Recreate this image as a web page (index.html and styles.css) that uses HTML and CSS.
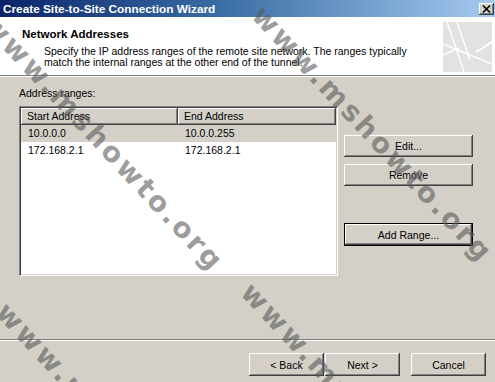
FILE: index.html
```html
<!DOCTYPE html>
<html lang="en">
<head>
    <meta charset="UTF-8">
    <title>Create Site-to-Site Connection Wizard</title>
    <link rel="stylesheet" href="styles.css">
</head>
<body>
    <div class="window">
        <!-- Barra de titulo -->
        <div class="titlebar">
            <span class="title">Create Site-to-Site Connection Wizard</span>
            <span class="close">
                <svg width="9" height="8" viewBox="0 0 9 8"><path d="M1 0.5 L8 7.5 M8 0.5 L1 7.5" stroke="#000" stroke-width="1.6"/></svg>
            </span>
        </div>

        <!-- Cabecera blanca -->
        <div class="header">
            <div class="header-text">
                <h1>Network Addresses</h1>
                <p>Specify the IP address ranges of the remote site network. The ranges typically<br>match the internal ranges at the other end of the tunnel.</p>
            </div>
            <svg class="header-icon" width="49" height="50" viewBox="0 0 49 50">
                <rect width="49" height="50" fill="#e2e2e2"/>
                <path d="M4 0 L21 50 M14 0 L27 38 M0 22 L49 42 M0 33 L16 26 M33 30 L49 20" stroke="#fff" stroke-width="1.5" fill="none"/>
            </svg>
        </div>

        <!-- Contenido -->
        <div class="content">
            <div class="label">Address ranges:</div>
            <div class="ranges">
                <div class="listbox">
                    <div class="list-head">
                        <span>Start Address</span>
                        <span>End Address</span>
                    </div>
                    <div class="row selected">
                        <span>10.0.0.0</span>
                        <span>10.0.0.255</span>
                    </div>
                    <div class="row">
                        <span>172.168.2.1</span>
                        <span>172.168.2.1</span>
                    </div>
                </div>
                <div class="side-buttons">
                    <button class="btn">Edit...</button>
                    <button class="btn">Remove</button>
                    <button class="btn default">Add Range...</button>
                </div>
            </div>
        </div>

        <!-- Botones inferiores -->
        <div class="footer">
            <button class="btn nav">&lt; Back</button>
            <button class="btn nav">Next &gt;</button>
            <button class="btn nav cancel">Cancel</button>
        </div>

        <!-- Marcas de agua -->
        <span class="watermark wm1">www.mshowto.org</span>
        <span class="watermark wm2">www.mshowto.org</span>
        <span class="watermark wm3">www.mshowto.org</span>
        <span class="watermark wm4">www.mshowto.org</span>
    </div>
</body>
</html>
```

FILE: styles.css
```css
/* Ventana del asistente */
body {
    margin: 0;
    background: #d4d0c8;
    font-family: "Liberation Sans", Arial, sans-serif;
    font-size: 10.5px;
    color: #000;
}

.window {
    position: relative;
    width: 495px;
    height: 382px;
    overflow: hidden;
    background: #d4d0c8;
}

.titlebar {
    height: 17px;
    display: flex;
    align-items: center;
    justify-content: space-between;
    padding: 0 1px 0 3px;
    background: linear-gradient(to right, #0a246a, #3a6ea5 45%, #a6caf0);
}

.title {
    color: #fff;
    font-weight: bold;
    font-size: 11.8px;
}

.close {
    width: 15px;
    height: 12px;
    display: flex;
    align-items: center;
    justify-content: center;
    background: #d4d0c8;
    box-shadow: inset -1px -1px #404040, inset 1px 1px #fff, inset -2px -2px #808080;
}

.header {
    height: 59px;
    box-sizing: border-box;
    display: flex;
    justify-content: space-between;
    padding: 5px 3px 0 22px;
    background: #fff;
    border-bottom: 1px solid #808080;
    box-shadow: 0 1px #fff;
    margin-bottom: 1px;
}

.header-text {
    padding-top: 6px;
}

.header h1 {
    margin: 0;
    font-size: 11.5px;
    line-height: 13px;
}

.header p {
    margin: 5px 0 0 22px;
    line-height: 11px;
}

.content {
    height: 262px;
    padding-left: 19px;
}

.label {
    padding-top: 10px;
    line-height: 13px;
    margin-bottom: 6px;
}

.ranges {
    display: flex;
    gap: 6px;
}

.listbox {
    width: 319px;
    height: 170px;
    box-sizing: border-box;
    background: #fff;
    border: 1px solid;
    border-color: #808080 #fff #fff #808080;
    box-shadow: inset 1px 1px #404040, inset -1px -1px #d4d0c8;
    padding: 1px 1px 0 1px;
}

.list-head,
.row {
    display: grid;
    grid-template-columns: 157px 158px;
}

.list-head span {
    height: 17px;
    line-height: 17px;
    padding-left: 6px;
    background: #d4d0c8;
    box-shadow: inset -1px -1px #404040, inset 1px 1px #fff, inset -2px -2px #808080;
}

.row span {
    height: 17px;
    line-height: 17px;
    padding-left: 7px;
}

.row.selected {
    background: #d4d0c8;
}

.side-buttons {
    display: flex;
    flex-direction: column;
    gap: 7px;
    padding-top: 29px;
}

/* Botones clasicos */
.btn {
    width: 129px;
    height: 22px;
    padding: 0;
    border: none;
    background: #d4d0c8;
    font-family: "Liberation Sans", Arial, sans-serif;
    font-size: 10.5px;
    color: #000;
    box-shadow: inset -1px -1px #404040, inset 1px 1px #fff, inset -2px -2px #808080;
}

.btn.default {
    height: 23px;
    margin-top: 30px;
    border: 1px solid #000;
}

.footer {
    height: 41px;
    box-sizing: border-box;
    display: flex;
    justify-content: flex-end;
    gap: 1px;
    padding: 13px 9px 0 0;
    border-top: 1px solid #808080;
    box-shadow: inset 0 1px #fff;
}

.btn.nav {
    width: 75px;
    height: 23px;
}

.btn.cancel {
    margin-left: 10px;
}

/* Marca de agua diagonal */
.watermark {
    position: absolute;
    transform: rotate(47deg);
    transform-origin: 0 0;
    font-family: "DejaVu Sans", sans-serif;
    font-weight: bold;
    font-size: 28px;
    line-height: 28px;
    letter-spacing: 3px;
    color: rgba(90, 90, 90, 0.6);
    white-space: nowrap;
    pointer-events: none;
}

.wm1 { left: -2px; top: 10px; }
.wm2 { left: 267px; top: 1px; }
.wm3 { left: 11px; top: 298px; }
.wm4 { left: 256px; top: 278px; }
```
